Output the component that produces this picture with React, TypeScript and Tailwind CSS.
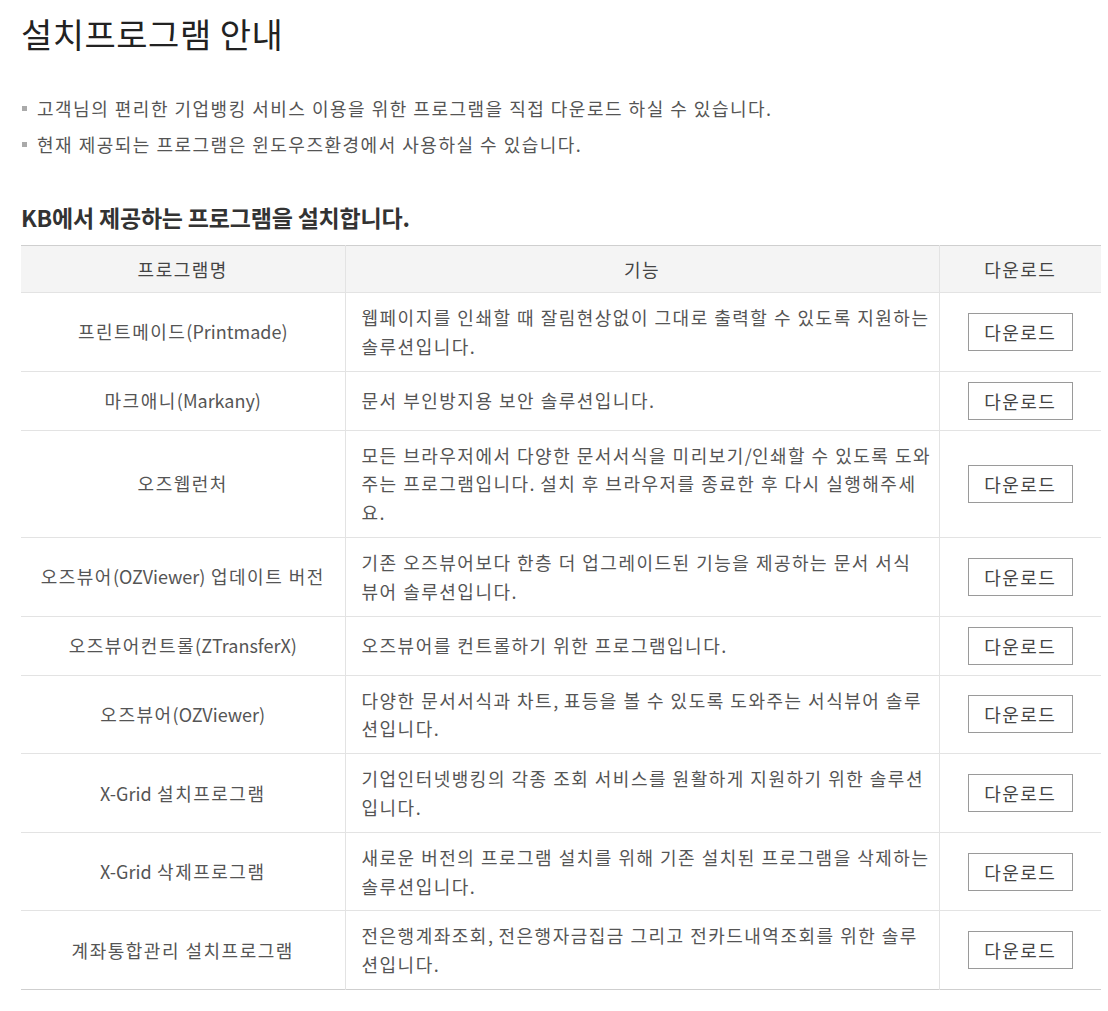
import React from "react";

const rows: { name: string; desc: string[] }[] = [
  { name: "프린트메이드(Printmade)", desc: ["웹페이지를 인쇄할 때 잘림현상없이 그대로 출력할 수 있도록 지원하는", "솔루션입니다."] },
  { name: "마크애니(Markany)", desc: ["문서 부인방지용 보안 솔루션입니다."] },
  { name: "오즈웹런처", desc: ["모든 브라우저에서 다양한 문서서식을 미리보기/인쇄할 수 있도록 도와", "주는 프로그램입니다. 설치 후 브라우저를 종료한 후 다시 실행해주세", "요."] },
  { name: "오즈뷰어(OZViewer) 업데이트 버전", desc: ["기존 오즈뷰어보다 한층 더 업그레이드된 기능을 제공하는 문서 서식", "뷰어 솔루션입니다."] },
  { name: "오즈뷰어컨트롤(ZTransferX)", desc: ["오즈뷰어를 컨트롤하기 위한 프로그램입니다."] },
  { name: "오즈뷰어(OZViewer)", desc: ["다양한 문서서식과 차트, 표등을 볼 수 있도록 도와주는 서식뷰어 솔루", "션입니다."] },
  { name: "X-Grid 설치프로그램", desc: ["기업인터넷뱅킹의 각종 조회 서비스를 원활하게 지원하기 위한 솔루션", "입니다."] },
  { name: "X-Grid 삭제프로그램", desc: ["새로운 버전의 프로그램 설치를 위해 기존 설치된 프로그램을 삭제하는", "솔루션입니다."] },
  { name: "계좌통합관리 설치프로그램", desc: ["전은행계좌조회, 전은행자금집금 그리고 전카드내역조회를 위한 솔루", "션입니다."] },
];

const font = { fontFamily: '"Noto Sans CJK KR", "Noto Sans", sans-serif' };

function Mixed({ text }: { text: string }) {
  const parts = text.split(/([A-Za-z()\-\/,.]+)/);
  return (
    <>
      {parts.map((p, i) =>
        /[A-Za-z()\-\/,.]/.test(p) ? (
          <span key={i} className="tracking-normal">{p}</span>
        ) : (
          <React.Fragment key={i}>{p}</React.Fragment>
        )
      )}
    </>
  );
}

export default function App() {
  return (
    <div className="bg-white w-[1108px] min-h-[1011px] pl-[21px] pr-[7px] pt-[10px]" style={font}>
      <h1 className="text-[34px] leading-[48px] text-[#222] font-normal tracking-[0.5px]">설치프로그램 안내</h1>
      <ul className="mt-[37px] flex flex-col gap-[10px]">
        {["고객님의 편리한 기업뱅킹 서비스 이용을 위한 프로그램을 직접 다운로드 하실 수 있습니다.", "현재 제공되는 프로그램은 윈도우즈환경에서 사용하실 수 있습니다."].map((t) => (
          <li key={t} className="flex items-center text-[18px] leading-[26px] text-[#555] tracking-[1.5px]">
            <span className="w-[5px] h-[5px] bg-[#aaa] mr-[10px] ml-[1px]" />
            {t}
          </li>
        ))}
      </ul>
      <h2 className="mt-[44px] text-[23px] leading-[32px] font-bold text-[#333] tracking-[-0.2px]">KB에서 제공하는 프로그램을 설치합니다.</h2>
      <table className="mt-[12px] w-[1080px] border-collapse table-fixed border-t border-t-[#cfcfcf] border-b border-b-[#cfcfcf] text-[18px] text-[#555] tracking-[1.5px]">
        <colgroup>
          <col className="w-[324px]" />
          <col className="w-[594px]" />
          <col className="w-[162px]" />
        </colgroup>
        <thead>
          <tr className="bg-[#f4f4f4] h-[47px]">
            <th className="font-normal text-[#444] border-b border-[#e3e3e3]">프로그램명</th>
            <th className="font-normal text-[#444] border-b border-l border-[#e3e3e3]">기능</th>
            <th className="font-normal text-[#444] border-b border-l border-[#e3e3e3]">다운로드</th>
          </tr>
        </thead>
        <tbody>
          {rows.map((r, i) => (
            <tr key={i} className={i < rows.length - 1 ? "border-b border-[#e3e3e3]" : ""}>
              <td className="text-center px-[8px] py-[10px] leading-[28.8px] whitespace-nowrap">
                <Mixed text={r.name} />
              </td>
              <td className="border-l border-[#e3e3e3] pl-[16px] pr-[4px] py-[10px] leading-[28.8px]">
                {r.desc.map((l, j) => (
                  <span key={j} className="block whitespace-nowrap">
                    <Mixed text={l} />
                  </span>
                ))}
              </td>
              <td className="border-l border-[#e3e3e3] py-[10px] text-center">
                <button className="w-[105px] h-[38px] border border-[#9a9a9a] bg-white text-[18px] text-[#444] leading-none tracking-[1.5px] align-middle">다운로드</button>
              </td>
            </tr>
          ))}
        </tbody>
      </table>
    </div>
  );
}
